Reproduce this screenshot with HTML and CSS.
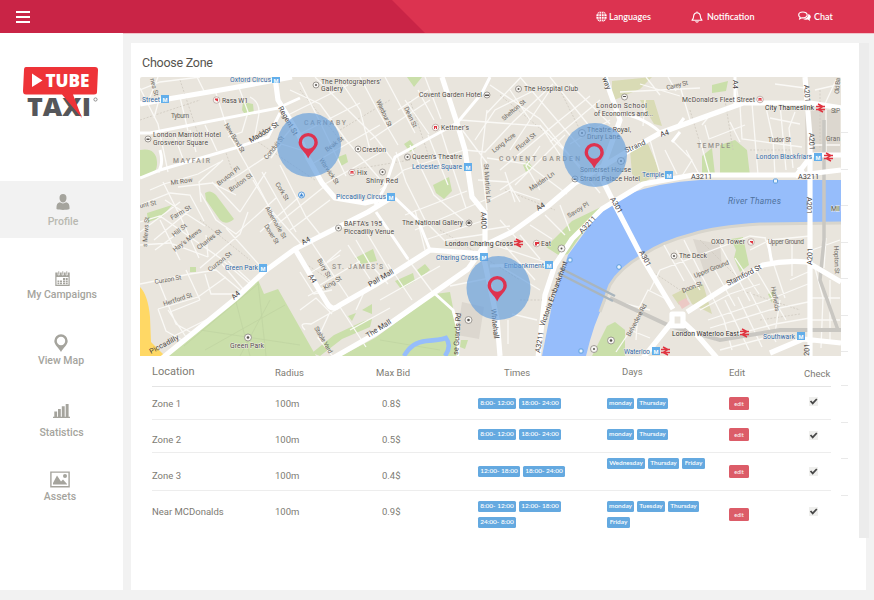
FILE: index.html
```html
<!DOCTYPE html>
<html lang="en">
<head>
<meta charset="utf-8">
<title>Tube Taxi - Choose Zone</title>
<link rel="stylesheet" href="styles.css">
</head>
<body>
<header class="topbar">
  <div class="topbar-brand">
    <div class="burger"><i></i><i></i><i></i></div>
  </div>
  <nav class="topnav">
    <a class="nav-lang"><svg width="11" height="11" viewBox="0 0 11 11"><circle cx="5.5" cy="5.5" r="5.3" fill="#fff"/><path d="M5.5 0v11M0 5.5h11M1 2.8h9M1 8.2h9" stroke="#dc3350" stroke-width=".7" fill="none"/><ellipse cx="5.5" cy="5.5" rx="2.6" ry="5.2" stroke="#dc3350" stroke-width=".7" fill="none"/></svg><span>Languages</span></a>
    <a class="nav-note"><svg width="12" height="12" viewBox="0 0 12 12"><path d="M1 9.2C2.6 8 2.6 6.500 2.700 4.800 2.900 2.800 4.200 1.700 6 1.700s3.100 1.100 3.300 3.100C9.400 6.500 9.400 8 11 9.200zM6 1.700V.4M4.700 10.200c.3 1.400 2.300 1.400 2.600 0" stroke="#fff" stroke-width="1.100" fill="none" stroke-linejoin="round"/></svg><span>Notification</span></a>
    <a class="nav-chat"><svg width="13" height="11" viewBox="0 0 13 11"><path d="M4.800 1C2.400 1 .7 2.200.7 4c0 1 .5 1.700 1.400 2.200L1.700 7.900l2-1.100c3 .3 5.500-.8 5.500-2.900C9.200 2.200 7.200 1 4.800 1z" fill="none" stroke="#fff" stroke-width="1.200"/><path d="M10.200 3c3 .8 3.300 3.600 1.400 4.900l.6 2-2.500-1.300c-1.900.3-3.700-.1-4.700-.9 3.200.1 5.600-1.700 5.200-4.700z" fill="#fff"/></svg><span>Chat</span></a>
  </nav>
</header>
<div class="layout">
  <aside class="sidebar">
    <svg class="logo" width="76" height="53" viewBox="22 66 76 53">
      <text x="27" y="115.500" class="logo-taxi" textLength="64" lengthAdjust="spacingAndGlyphs">TAXI</text>
      <path d="M26 67 H95 Q98 67 98 70 L97 92 Q97 94.500 94 94.500 H73 L82 118 L62 94.500 H26 Q23 94.500 23 91 L24 70 Q24 67 26 67z" fill="#ee3338"/>
      <path d="M32 73.500 L42.500 80.500 L32 87z" fill="#fff"/>
      <text x="45.500" y="87.300" class="logo-tube" textLength="44" lengthAdjust="spacingAndGlyphs">TUBE</text>
      <circle cx="95.500" cy="99.500" r="1.600" fill="none" stroke="#777" stroke-width=".8"/>
    </svg>
    <a class="side profile"><svg width="14" height="16" viewBox="0 0 14 16"><path d="M7 0c2.300 0 3.500 1.600 3.500 4S9 8.600 7 8.600 3.500 6.400 3.500 4 4.700 0 7 0zM3.800 8.300c2 1.500 4.400 1.500 6.400 0C13 9 13.700 11 13.500 15c-3 1.200-10 1.200-13 0C.3 11 1 9 3.800 8.300z"/></svg><span>Profile</span></a>
    <a class="side campaigns"><svg width="15" height="16" viewBox="0 0 15 16"><path fill-rule="evenodd" d="M.3 1.500h14.400v13.500H.3zM1.500 6v7.800h12V6z"/><path d="M3 0h1.500v4H3zM7 0h1.500v4H7zM11 0h1.500v4H11z" stroke="#fff" stroke-width=".6"/><path d="M8 7h2v2H8zM10.700 7h2v2h-2zM2.500 9.500h1.800v1.700H2.500zM5 9.500h2v1.700H5zM8 9.500h2v1.700H8zM10.700 9.500h2v1.700h-2zM2.500 11.800h1.800v1.500H2.500zM5 11.800h2v1.500H5zM8 11.800h2v1.500H8zM10.700 11.800h2v1.500h-2z"/></svg><span>My Campaigns</span></a>
    <a class="side viewmap"><svg width="14" height="18" viewBox="0 0 14 18"><path fill-rule="evenodd" d="M7 .3a6.700 6.700 0 0 1 6.700 6.700C13.700 11 9 14 7 18 5 14 .3 11 .3 7A6.700 6.700 0 0 1 7 .3zM7 2.800a4.200 4.200 0 1 0 0 8.400 4.200 4.200 0 0 0 0-8.400z"/></svg><span>View Map</span></a>
    <a class="side stats"><svg width="17" height="14" viewBox="0 0 17 14"><path d="M0 12.700h17V14H0zM1.300 7.500h2.800V13H1.300zM5 5h2.800v8H5zM8.800 2.300h2.900V13H8.800zM12.700 0h2.900v13h-2.900z"/></svg><span>Statistics</span></a>
    <a class="side assets"><svg width="20" height="17" viewBox="0 0 20 17"><path fill-rule="evenodd" d="M.2.400h19.600v16H.2zM1.600 1.800V15h16.800V1.800z"/><path d="M3 13.500V12l4-7.500 4 6 2-2 4 4.500v.500z"/><circle cx="15" cy="5" r="2"/></svg><span>Assets</span></a>
  </aside>
  <main class="content">
    <div class="panel-row">
      <section class="panel">
        <h1>Choose Zone</h1>
        <div class="map-row">
        <svg class="map" width="701" height="279" viewBox="140 77 701 279">
          <rect x="140" y="77" width="701" height="279" fill="#e9e5dd"/>
          <!-- blocks -->
          <g fill="#dcd7cf"><path d="M462 302l22 5-5 32-22-4zM693 239l27 5 2 24-18 3zM805 110h35v45h-35z"/></g>
          <g fill="#d9dbb5"><path d="M612 81l40-4-12 12-28 12zM630 150l18-6 12 28-18 12-10-10zM640 100l14 0 8 26-8-2zM685 291l18-7 9 30-20-10zM672 295l12-6 3 10-8 6z"/></g>
          <path d="M678 302l8-4 4 6-8 5z" fill="#ecc9c5"/>
          <!-- parks -->
          <g fill="#cadfaa">
            <path d="M168 356L258 280L264 294L278 289L316 356z"/>
            <path d="M341 356L375 338L435 294L450 292L455 318L460 356z"/>
            <path d="M140 150q16-3 17 12t-17 14zM205 193q5-4 11 2l18 24q-8 7-14 1l-14-20zM147 213l25-8-10 12-14 5z"/>
            <path d="M243 102l10 2 1 10-8 2-4-6zM407 77h15l-8 10zM404 144l6-4 6 8-6 4zM433 185l16-8 3 14-8 8-8-6zM523 165l5-4 5 7-7 4zM338 157l8-3 2 8-7 4zM355 258l18-9 4 12-16 3zM395 281l18-8 2 8-14 8zM417 270l8-6 5 6-9 7zM190 267h6v5h-6z"/>
            <path d="M546 247l26-26 29-14-10 14-23 33-8 2zM702 156l10-8 3 27-13 2zM720 145l15-5 12 10 3 26h-30zM712 85l16-4-2 10-14 2zM731 239l12-2 6 28-9 7-6-14 2-8zM768 294l6-3-2 12zM592 356l15-30 8-4 10 8v26zM580 225l18-12-8 12z"/>
            <path d="M312 353l22-18 30-14 8-2-2 8-28 12-22 17zM348 316l8-3-4 8zM362 310l10-6v10zM461 340l7 0-3 9-5-2z"/>
          </g>
          <path d="M184 346L258 284M235 298l15 58M258 282l8 74M205 350l80-45M270 300l-30 56M200 330l100 15M380 340l60 10" stroke="#bfd3a1" stroke-width=".7" fill="none"/>
          <path d="M140 287q8 8 10 30l1 25 14 14h-25z" fill="#ffd865"/>
          <!-- water -->
          <path d="M542 356L552 305L568 255L590 225Q605 206 625 195Q660 182 700 180H841V223L760 224Q715 227 693 234Q662 242 643 255Q620 268 610 285L605 302Q594 322 586 356z" fill="#96bdfb"/>
          <path d="M841 223L760 224Q715 227 693 234Q662 242 643 255Q620 268 610 285L600 312" fill="none" stroke="#d8d5cc" stroke-width="3"/>
          <path d="M404 356q8-14 22-15t20-3q6 8-1 18" fill="none" stroke="#96bdfb" stroke-width="4.500"/>
          <!-- dashed paths -->
          <g stroke="#cbc5bb" stroke-width=".7" stroke-dasharray="2 1.500" fill="none"><path d="M140 120l60-20M180 80l20 60M225 150l12 34M255 140l60 40M300 90l40 50M340 130l50-30M350 170l60-10M410 100l20 60M500 95l60 50M505 190l50 20M560 90l20 40M690 110l12 40M725 100l8 50M750 150h40M820 90v60M300 260l30 20M200 220l50 40M440 230l80 50M520 300h26M650 270l30 20M700 240l40 40M740 290l60 20M760 320l40-6"/></g>
          <!-- side streets -->
          <g class="minor">
            <path d="M140 88l18 36 10 48M158 77l-8 20M160 96l-6 22M180 97l8 34M197 77l8 16M215 90l14 44 26 46 24 46M238 85l10 27-6 20-14 5M205 125l12 26M175 137l8 22M190 130l6 22M250 97q12 6 8 22l-3 16M140 90l20-8 40-5"/>
            <path d="M150 190l14-6 34-10 22-12M163 182l18 36 18 40M140 205l30-12 20 2 14 26M178 187l34-4 24 12M200 192l16 28 20 14 40-36M230 180l10-6 30-20 20-24M212 182l28 30M240 212l26-40M223 160l-24 22 2 20M253 180l18 30 30 34M262 172l34 60M280 165l26 52 16 20M300 196l-40 36M325 186l-50 40M330 200l-40 30M271 158l10-14 20 6"/>
            <path d="M140 222l20-6 60 42 30 26M155 250l22-16M180 260l-20-40M200 268l40-34 8-22M165 200l40 26M190 210l-36 30M140 245l30-2 38 14M208 257l-2-22M140 284l50-10 26-4 24 20M158 309l40-12 28-20M168 310l20 30M158 280l18 44 18 10M158 309l8 22 18 10M186 270l14 30M205 274l6 20 30 0M200 300l-30 12M210 318l-40 20M244 290l-22-26M252 283l-24-22M262 268l-36-40M140 232l40-30"/>
            <path d="M290 90l30 14 26 36 40 46M300 82l20 40 26 54M315 77l60 60 20 26M340 80l20 30 10 40M360 77l18 34 20 34M385 77l16 30 14 26M405 100l24 34M418 90l16 30M430 100l-60 40M425 77l16 42M288 115l60-30M298 135l62-32M310 165l70-40M325 184l60-34M396 152l10 30 20 40 20 20M410 145l24 50 30 26M428 135l20 50M440 128l16 50 10 30M380 190l24-20 60-20M405 215l62-24M415 230l70-30M425 240l60-20M398 110l30-20"/>
            <path d="M487 110l-6 50 6 50M460 120l80 6 40 40M465 150l20 2 28-30 40-38M487 113l34-36M490 85l50 34 60 74M520 77l60 70M550 77l48 60M570 84l40 40M500 170l60-50 30-24M510 150l40-60M515 185l50-50M487 158l40 6 40 30M475 140l20-30 40-20M500 190l30-20M478 180l30 2 12 20M490 200l20-10 30 10M505 172l10 30M540 190l-14-24 14-20M600 100l-50 42M610 120l-40 24M457 123l30 40M530 120l-20-30M540 125l20 30"/>
            <path d="M645 100l-2 26M660 95l-14-18M620 92l40-2 40-2M668 77l8 14M680 86l10 34M640 84l40 12M700 140l10 36M705 125l4 14 36-14M710 115l-8 10M672 140l20 20-10 16M665 150l12 24M686 150l14 26M650 140l10 34M740 105l2 34 60 8M752 103l6 72M765 103l8 36 2 36M780 104l6 66M795 112l-6 16 4 40M730 122l10 20M770 118l30 6M775 84l30 4M735 77l4 26M836 80l-12 26M826 110v50M815 90l26-6M812 145h28"/>
            <path d="M310 240l40 60M327 262l14-12M320 285l40-24M348 245l22 34M340 255l-30 18M356 240l14 24 18 20M365 230l24 40M300 272l14 22 18-4M308 296l22-12M300 310l16-12 16 16M305 330q-8-8 6-6l28-16M340 307l26 40M330 312l-12 26 16 20M350 330l40-22M366 288l-10 22M388 264l24 36M404 254l30 40M380 300l60-34M395 320l50-36M445 252l30 10M425 250l-10-40M446 240l40-6M450 286l40-8M512 314l25 6M508 320v24M540 290l-40-24M520 235l20 24M505 246l30 34M530 225l22 14M545 215l20 20M560 205l10 26M545 262l-60-20M500 220l18 20M485 230l25-4"/>
            <path d="M668 300l-20-10-10 20-2 30M650 290l10-20 90-34 16 2M664 245l20 36M684 240l20 40 20 40 8 30M700 290l-24-40M720 245l30 56M715 270l20 36M735 258l24 36M750 250l20-10 40-4M765 238l20 60M792 240v36M756 270l30 50M708 320l60-20 40-16M710 328l60-18 38-8M715 340l60-16 35-6M720 350l60-16M725 300l24 50M738 297l24 50M750 292l26 50M700 310l30-16 30-10M780 300l-6 40M815 268l8 30-2 50M812 298h28M812 320h28M830 280v60M826 238l-2 30M812 250l28-10M790 280l18-8M610 300l40 10M640 316l-24 36M630 330l20 8"/>
          </g>
          <g stroke="#c9c7c2" fill="none"><path d="M610 298l60 28 50 14 60-10 61 0" stroke-width="4"/><path d="M560 268l55 28M558 273l55 28" stroke-width="2.500" stroke="#a9b5bd"/><path d="M824 120v120l-4 40 18 50" stroke-width="3.500"/></g>
          <!-- primary roads -->
          <g class="medium">
            <path d="M140 133l10 0L278 108L300 98M140 178L160 170L235 148L268 137L280 113M160 150q4 14-2 22M375 205L385 187L395 157L457 123L482 93L490 77M376 212L408 259M395 198L418 220L430 250M433 292L453 310L458 330V356M610 112Q640 114 660 132M735 77V104M772 265l-4-25M660 136L678 126L684 118M553 264L490 266M680 132L672 142"/>
          </g>
          <g class="major">
            <path d="M140 104L168 99L232 88L292 77M275 77L278 100L298 133L308 158L322 183L335 198L365 203L394 196"/>
            <path d="M160 360L235 299L265 271L295 249L368 212L394 196M295 249L327 303Q332 312 340 305L375 285L430 250L485 254"/>
            <path d="M333 358L375 334L435 292L468 269L485 245L512 232L548 206L575 183L630 150L660 133L743 103L810 103L841 108"/>
            <path d="M442 77L457 123L465 150L472 197L485 213V254M482 250L497 319L500 356"/>
            <path d="M538 358L545 295L555 265L572 239L602 209L643 184L693 175H800L841 170M795 177L812 155L841 155M805 177l-6-10"/>
            <path d="M605 77L610 92L620 120L600 175L615 205L643 259L673 309M805 77L810 137V356M672 314H683V326H672zM687 312L723 289L763 265Q785 260 807 262L841 282M672 322L643 358M683 322L697 335L717 358M770 353L803 339L841 343"/>
          </g>
          <!-- station badges -->
          <g class="metro"><rect x="272" y="77" width="8" height="6"/><rect x="161" y="95" width="8" height="8"/><rect x="387" y="193" width="8" height="8"/><rect x="464" y="163" width="8" height="8"/><rect x="259" y="264" width="8" height="8"/><rect x="480" y="253" width="8" height="8"/><rect x="545" y="261" width="8" height="8"/><rect x="665" y="171" width="8" height="8"/><rect x="814" y="153" width="8" height="8"/><rect x="652" y="347" width="8" height="8"/><rect x="797" y="332" width="8" height="8"/></g>
          <g class="badge-m"><text x="273.500" y="82.500">M</text><text x="162.500" y="101.500">M</text><text x="388.500" y="199.500">M</text><text x="465.500" y="169.500">M</text><text x="260.500" y="270.500">M</text><text x="481.500" y="259.500">M</text><text x="546.500" y="267.500">M</text><text x="666.500" y="177.500">M</text><text x="815.500" y="159.500">M</text><text x="653.500" y="353.500">M</text><text x="798.500" y="338.500">M</text></g>
          <g stroke="#e03440" stroke-width="1.400" fill="none"><path id="rail" d="M816 106.500h9M816 109.500h9M818 104l5 2.500-5 3 5 2.500"/><use href="#rail" x="8" y="49"/><use href="#rail" x="-302" y="135"/><use href="#rail" x="-155" y="243"/><use href="#rail" x="-76" y="225"/></g>
          <g fill="#f7f5f2" stroke="#8b8781" stroke-width=".8"><circle cx="316" cy="85" r="3"/><circle cx="148" cy="139" r="3"/><circle cx="358" cy="149" r="3"/><circle cx="382.500" cy="172" r="3"/><circle cx="487" cy="95" r="3"/><circle cx="518.500" cy="89" r="3"/><circle cx="407.500" cy="157" r="3"/><circle cx="338.500" cy="228" r="3"/><circle cx="469" cy="223" r="3"/><circle cx="624.500" cy="97" r="3"/><circle cx="674" cy="256" r="3"/><circle cx="248" cy="337.500" r="3.500"/><circle cx="468.500" cy="320" r="3.500"/><circle cx="561.500" cy="248.500" r="3.500"/><circle cx="611" cy="340.500" r="3.500"/><circle cx="594" cy="349" r="3.500"/><circle cx="582" cy="133" r="3.500"/><circle cx="621" cy="161" r="3.500"/><circle cx="575" cy="179" r="3"/></g>
          <g fill="#56524e"><circle cx="316" cy="85" r="1"/><circle cx="358" cy="149" r="1"/><circle cx="382.500" cy="172" r="1"/><circle cx="518.500" cy="89" r="1"/><circle cx="407.500" cy="157" r="1"/><circle cx="338.500" cy="228" r="1"/><circle cx="674" cy="256" r="1"/><circle cx="561.500" cy="248.500" r="1"/><circle cx="248" cy="337.500" r="1.300"/><circle cx="468.500" cy="320" r="1.300"/><circle cx="611" cy="340.500" r="1.300"/><circle cx="594" cy="349" r="1"/><circle cx="582" cy="133" r="1"/><circle cx="621" cy="161" r="1"/><path d="M485 94.500h4v1.500h-4zM146.500 138.500h3v1.500h-3zM467.500 221.500h3v2.500h-3zM623 96h3v1h-3zM573.500 178.500h3v1.500h-3z"/></g>
          <g fill="#f7f5f2" stroke="#b9a5a0" stroke-width=".8"><circle cx="216.500" cy="100" r="3.300"/><circle cx="352" cy="172.500" r="3.300"/><circle cx="435.500" cy="127.500" r="3.300"/><circle cx="760" cy="99.500" r="3.300"/><circle cx="751" cy="242" r="3.300"/><circle cx="536.500" cy="243.500" r="3.300"/></g>
          <g fill="#e03440"><path d="M215 98.500h3v3l-3-1.500zM350.500 171h3v3h-1v-1.500h-1v1.500h-1zM434 126h3v3h-1v-1.500h-1v1.500h-1zM758.500 98h3v3h-1v-1.500h-1v1.500h-1zM750 241h3v3l-3-2zM535 242h4v2h-2v1.500h-2z"/></g>
          <g fill="#e9f3fd" stroke="#5d9fdd" stroke-width="1"><circle cx="301.500" cy="195" r="3"/><rect x="773.500" y="179" width="4" height="4" rx="1"/><rect x="568" y="258" width="4" height="4" rx="1"/><circle cx="619" cy="267" r="2.300"/><rect x="579" y="349" width="4" height="4" rx="1"/></g>
          <path d="M299.500 196.500l2-3.500 2 3.500z" fill="#3f87d2"/>
          <!-- place labels -->
          <g class="poi">
            <text x="321" y="84" textLength="60">The Photographers'</text><text x="321" y="91" textLength="22">Gallery</text>
            <text x="222" y="103" textLength="26">Rasa W1</text><text x="153" y="137" textLength="68">London Marriott Hotel</text><text x="153" y="145" textLength="55">Grosvenor Square</text>
            <text x="362" y="152" textLength="24">Creston</text><text x="357" y="175" textLength="10">Hix</text><text x="366" y="183" textLength="32">Shiny Red</text>
            <text x="419" y="97" textLength="63">Covent Garden Hotel</text><text x="524" y="91" textLength="54">The Hospital Club</text><text x="441" y="130" textLength="28">Kettner's</text><text x="412" y="159" textLength="50">Queen's Theatre</text>
            <text x="596" y="108" textLength="51">London School</text><text x="594" y="116" textLength="59">of Economics and...</text><text x="587" y="132" textLength="44">Theatre Royal,</text><text x="587" y="139" textLength="33">Drury Lane</text><text x="580" y="172" textLength="51">Somerset House</text><text x="580" y="181" textLength="60">Strand Palace Hotel</text>
            <text x="682" y="102" textLength="73">McDonald's Fleet Street</text><text x="344" y="226" textLength="38">BAFTA's 195</text><text x="344" y="234" textLength="50">Piccadilly Venue</text><text x="402" y="225" textLength="61">The National Gallery</text>
            <text x="541" y="246" textLength="10">Eat</text><text x="711" y="244" textLength="34">OXO Tower</text><text x="679" y="258" textLength="28">The Deck</text><text x="230" y="348" textLength="34">Green Park</text><text x="831" y="211" textLength="9">Mill</text>
          </g>
          <g class="poi dark"><text x="765" y="110" textLength="49">City Thameslink</text><text x="445" y="246" textLength="68">London Charing Cross</text><text x="672" y="336" textLength="67">London Waterloo East</text></g>
          <g class="tube"><text x="230" y="82" textLength="41">Oxford Circus</text><text x="142" y="102" textLength="18">Street</text><text x="336" y="199" textLength="50">Piccadilly Circus</text><text x="412" y="169" textLength="50">Leicester Square</text><text x="225" y="270" textLength="33">Green Park</text><text x="436" y="260" textLength="42">Charing Cross</text><text x="504" y="268" textLength="40">Embankment</text><text x="642" y="177" textLength="22">Temple</text><text x="756" y="159" textLength="56">London Blackfriars</text><text x="624" y="354" textLength="26">Waterloo</text><text x="763" y="339" textLength="32">Southwark</text></g>
          <g class="area"><text x="173" y="163" textLength="37">MAYFAIR</text><text x="304" y="125" textLength="42">CARNABY</text><text x="499" y="161" textLength="81">COVENT GARDEN</text><text x="697" y="148" textLength="33">TEMPLE</text><text x="332" y="269" textLength="51">ST. JAMES'S</text></g>
          <text class="river" x="728" y="204" textLength="53">River Thames</text>
          <g class="street">
            <text x="171" y="118" textLength="18">Tyburn</text><text transform="translate(150 79) rotate(75)">nes St</text><text transform="translate(171 185) rotate(-8)">Mt Row</text>
            <text transform="translate(224 125) rotate(58)" textLength="33">New Bond St</text><text transform="translate(251 143) rotate(-32)" textLength="33" class="bold">Maddox St</text><text transform="translate(278 108) rotate(60)" textLength="32" class="bold">Regent St</text><text transform="translate(267 160) rotate(-52)" textLength="28">Conduit St</text><text transform="translate(327 152) rotate(-36)" textLength="21">Beak St</text><text transform="translate(319 160) rotate(56)" textLength="30">Warwick St</text>
            <text transform="translate(219 186) rotate(-38)" textLength="27">Bruton Pl</text><text transform="translate(231 192) rotate(-36)" textLength="27">Bruton St</text><text transform="translate(275 184) rotate(58)" textLength="20">Cork St</text><text transform="translate(265 208) rotate(60)" textLength="36">Albemarle St</text><text transform="translate(264 226) rotate(58)" textLength="22">Dover St</text>
            <text transform="translate(140 208) rotate(-12)">unt St</text><text transform="translate(172 220) rotate(-30)">Farm St</text><text transform="translate(174 237) rotate(-38)" textLength="17">Hill St</text><text transform="translate(175 252) rotate(-38)" textLength="34">Hay's Mews</text><text transform="translate(199 250) rotate(-38)" textLength="29">Charles St</text><text transform="translate(210 272) rotate(-38)" textLength="28">Curzon St</text><text transform="translate(155 284) rotate(-10)" textLength="27">Curzon St</text><text transform="translate(164 306) rotate(-18)" textLength="30">Hertford St</text><text transform="translate(147 247) rotate(-86)">s Mews St</text>
            <text transform="translate(376 101) rotate(65)" textLength="29">Wardour St</text><text transform="translate(404 108) rotate(65)" textLength="22">Dean St</text><text transform="translate(504 121) rotate(-40)" textLength="29">Shelton St</text><text transform="translate(494 153) rotate(-38)" textLength="28">Long Acre</text><text transform="translate(518 151) rotate(-40)" textLength="24">Floral St</text><text transform="translate(484 164) rotate(86)" textLength="39">St Martin's Ln</text><text transform="translate(531 191) rotate(-34)" textLength="29">Maiden Ln</text><text transform="translate(569 218) rotate(-32)" textLength="24">Savoy Pl</text>
            <text transform="translate(667 90) rotate(-14)" textLength="22">Carey St</text><text x="768" y="142" textLength="23">Tudor St</text><text transform="translate(839 94) rotate(-86)" textLength="16">Old Ba</text><text x="831" y="113" textLength="9">St P</text><text x="826" y="141" textLength="14">Gran</text>
            <text transform="translate(317 260) rotate(60)" textLength="21">Bury St</text><text transform="translate(325 290) rotate(-32)" textLength="20">King St</text><text transform="translate(314 328) rotate(60)" textLength="30">Stable Yard</text>
            <text transform="translate(695 278) rotate(-22)" textLength="37">Upper Ground</text><text x="768" y="244" textLength="36">Upper Ground</text><text transform="translate(683 293) rotate(-22)" textLength="21">Doon St</text><text transform="translate(630 337) rotate(-62)" textLength="36">Belvedere Rd</text><text transform="translate(771 287) rotate(80)" textLength="25">Hatfields</text><text transform="translate(834 246) rotate(88)" textLength="28">Hopton St</text>
            <g class="bold"><text transform="translate(370 287) rotate(-30)" textLength="28">Pall Mall</text><text transform="translate(368 338) rotate(-32)" textLength="28">The Mall</text><text transform="translate(626 153) rotate(-24)" textLength="22">Strand</text><text transform="translate(728 286) rotate(-27)" textLength="38">Stamford St</text><text transform="translate(151 354) rotate(-28)" textLength="32">Piccadilly</text><text transform="translate(491 309) rotate(84)" textLength="30">Whitehall</text><text transform="translate(458 355) rotate(-86)" textLength="42">se Guards Rd</text><text transform="translate(544 327) rotate(-70)" textLength="69">Victoria Embankment</text>
            <text transform="translate(540 353) rotate(-80)">A3211</text><text transform="translate(582 234) rotate(-46)">A3211</text><text x="691" y="179">A3211</text><text x="798" y="179">A3211</text><text transform="translate(804 85) rotate(86)">A201</text><text transform="translate(809 133) rotate(88)">A201</text><text transform="translate(807 197) rotate(90)">A201</text><text transform="translate(812 265) rotate(-88)">A201</text><text transform="translate(809 356) rotate(-88)">201</text><text transform="translate(610 199) rotate(60)">A301</text><text transform="translate(639 252) rotate(62)">A301</text><text transform="translate(481 212) rotate(88)">A400</text><text transform="translate(538 211) rotate(-32)">A4</text><text transform="translate(661 137) rotate(-18)">A4</text><text transform="translate(303 245) rotate(-28)">A4</text><text transform="translate(308 276) rotate(60)">A4</text><text transform="translate(234 300) rotate(-42)">A4</text><text transform="translate(733 80) rotate(90)">A4</text><text transform="translate(602 78) rotate(68)">way</text></g>
          </g>
          <!-- zones -->
          <g class="zone"><circle cx="309" cy="145" r="32"/><circle cx="595" cy="155" r="32"/><circle cx="498.500" cy="288" r="32"/></g>
          <g fill="#de3350"><path id="pin" fill-rule="evenodd" d="M308.200 133a9.600 9.600 0 0 1 9.600 9.600c0 6-7 9.500-9.600 15.900-2.600-6.400-9.600-9.900-9.600-15.900a9.600 9.600 0 0 1 9.600-9.600zm0 3.300a6.200 6.200 0 1 0 0 12.400 6.200 6.200 0 0 0 0-12.400z"/><use href="#pin" x="286" y="10"/><use href="#pin" x="189" y="143"/></g>
        </svg>
        <div class="ticks"><i></i><i></i><i></i><i></i><i></i><i></i><i></i></div>
        </div>
        <div class="table-row">
        <div class="table">
          <div class="row head"><span class="big">Location</span><span>Radius</span><span>Max Bid</span><span class="h-times">Times</span><span class="h-days">Days</span><span class="h-edit">Edit</span><span class="h-check">Check</span></div>
          <div class="row r1"><span class="txt">Zone 1</span><span class="txt">100m</span><span class="txt bid">0.8$</span><div class="tags times"><b class="t1">8:00- 12:00</b><b class="t2">18:00- 24:00</b></div><div class="tags days"><b class="d-mon">monday</b><b class="d-thu">Thursday</b></div><button>edit</button><em><svg width="9" height="9" viewBox="0 0 9 9"><path d="M1.500 4l2.200 2.400L7.800 2"/></svg></em></div>
          <div class="row r2"><span class="txt">Zone 2</span><span class="txt">100m</span><span class="txt bid">0.5$</span><div class="tags times"><b class="t1">8:00- 12:00</b><b class="t2">18:00- 24:00</b></div><div class="tags days"><b class="d-mon">monday</b><b class="d-thu">Thursday</b></div><button>edit</button><em><svg width="9" height="9" viewBox="0 0 9 9"><path d="M1.500 4l2.200 2.400L7.800 2"/></svg></em></div>
          <div class="row r3"><span class="txt">Zone 3</span><span class="txt">100m</span><span class="txt bid">0.4$</span><div class="tags times"><b class="t2">12:00- 18:00</b><b class="t2">18:00- 24:00</b></div><div class="tags days"><b class="d-wed">Wednesday</b><b class="d-thu">Thursday</b><b class="d-fri">Friday</b></div><button>edit</button><em><svg width="9" height="9" viewBox="0 0 9 9"><path d="M1.500 4l2.200 2.400L7.800 2"/></svg></em></div>
          <div class="row r4"><span class="txt">Near MCDonalds</span><span class="txt">100m</span><span class="txt bid">0.9$</span><div class="tags times"><b class="t1">8:00- 12:00</b><b class="t2">12:00- 18:00</b><b class="t1">24:00- 8:00</b></div><div class="tags days"><b class="d-mon">monday</b><b class="d-tue">Tuesday</b><b class="d-thu">Thursday</b><b class="d-fri">Friday</b></div><button>edit</button><em><svg width="9" height="9" viewBox="0 0 9 9"><path d="M1.500 4l2.200 2.400L7.800 2"/></svg></em></div>
        </div>
        <div class="ticks low"><i></i><i></i><i></i><i></i></div>
        </div>
      </section>
      <div class="scrollbar"></div>
    </div>
    <div class="panel-foot"></div>
  </main>
</div>
</body>
</html>
```
FILE: styles.css
```css
* { box-sizing: border-box; }
body { margin: 0; width: 874px; height: 600px; overflow: hidden; background: #f2f2f2; font-family: Roboto, "Open Sans", sans-serif; color: #7d7b73; }
.topbar { display: flex; height: 33px; background: #dc3350; box-shadow: 0 1px 0 #f0c4ca; }
.topbar-brand { width: 425px; height: 33px; padding: 11px 16px; background: #c92446; clip-path: polygon(0 0, 392px 0, 425px 33px, 0 33px); }
.burger { display: grid; gap: 3px; width: 14px; }
.burger i { height: 2px; background: #fff; }
.topnav { display: flex; padding-left: 171px; color: #fff; font: 600 9px/33px Lato, sans-serif; }
.topnav a { display: flex; align-items: center; }
.nav-lang { width: 95px; gap: 2px; }
.nav-note { width: 107px; gap: 4px; }
.nav-chat { gap: 3px; }

.layout { display: flex; height: 557px; }
.sidebar { width: 123px; flex: none; background: #fff; display: flex; flex-direction: column; }
.logo { margin: 33px 0 62px 22px; flex: none; }
.logo-tube { font: 800 18px "Open Sans", sans-serif; fill: #fff; }
.logo-taxi { font: 800 25px "Open Sans", sans-serif; fill: #55565a; }
.side { display: flex; flex-direction: column; align-items: center; fill: #a5a49d; color: #a5a49d; font-size: 10.500px; line-height: 16px; font-weight: 500; flex: none; }
.profile { height: 57px; padding: 13px 0 0 3px; background: #f2f2f2; color: #b9b9b1; }
.profile span { margin-top: 4px; }
.campaigns { padding-top: 33px; padding-left: 1px; }
.viewmap { padding-top: 31px; padding-right: 1px; }
.viewmap span { margin-top: 1px; }
.stats { padding-top: 35px; }
.stats span { margin-top: 7px; }
.assets { padding: 30px 3px 0 0; }
.assets span { margin-top: 1px; }

.content { flex: none; width: 751px; padding: 10px 5px 0 8px; }
.panel-row { display: flex; height: 495px; }
.panel { width: 728px; flex: none; padding-left: 9px; background: #fff; }
.panel h1 { margin: 0; padding: 11px 0 0 2px; height: 34px; font-size: 12.500px; line-height: 18px; letter-spacing: -.25px; font-weight: 400; color: #55534e; }
.scrollbar { width: 10px; background: #ececec; }
.panel-foot { height: 52px; width: 735px; background: #fff; }
.map-row { display: flex; height: 279px; }
.map { display: block; flex: none; border-radius: 2px 2px 0 0; }
.ticks { display: grid; grid-auto-rows: 36.500px; padding-top: 55px; width: 7px; }
.ticks i { width: 7px; height: 1px; background: #e9e9e9; }
.minor path { fill: none; stroke: #faf9f6; stroke-width: 1.300; }
.medium path { fill: none; stroke: #fff; stroke-width: 3; stroke-linejoin: round; }
.major path { fill: none; stroke: #fff; stroke-width: 5.200; stroke-linejoin: round; }
.metro rect { fill: #62aeea; }
.badge-m { font: 700 6px "Liberation Sans", sans-serif; fill: #fff; }
.map text { white-space: pre; }
.poi { font: 400 6.800px Roboto, sans-serif; fill: #4f4b47; paint-order: stroke; stroke: #f3f0eb; stroke-width: .8; }
.dark { fill: #2f2d2b; }
.tube { font: 400 6.800px Roboto, sans-serif; fill: #2f68a6; paint-order: stroke; stroke: #f3f0eb; stroke-width: .8; }
.area { font: 500 6.800px Roboto, sans-serif; fill: #96928c; }
.river { font: italic 400 8.500px Roboto, sans-serif; fill: #4f719b; }
.street { font: 6.500px Roboto, sans-serif; fill: #6d6963; }
.bold { font-weight: 400; font-size: 7.300px; fill: #45423f; }
.zone circle { fill: #649edb; fill-opacity: .68; }

.table-row { display: flex; }
.table { width: 679px; margin-left: 12px; }
.row { display: grid; grid-template-columns: 123px 107px 96px 129px 122px 80px 22px; align-items: start; border-bottom: 1px solid #ededed; }
.head { height: 31px; font-size: 9.500px; line-height: 16px; padding-top: 9px; grid-template-columns: 123px 101px 128px 118px 107px 75px 27px; border-color: #e4e4e4; }
.head .big { font-size: 11px; margin-top: -1px; }
.h-days { margin-top: -1px; }
.h-check { margin-top: 1px; }
.txt { font-size: 9.500px; line-height: 14px; white-space: nowrap; }
.r1 { height: 33px; }
.r1 .txt { margin-top: 10px; }
.r1 .tags { margin-top: 11px; }
.r1 button { margin-top: 10px; }
.r1 em { margin-top: 10px; }
.r2 { height: 33px; }
.r2 .txt { margin-top: 13px; }
.r2 .tags { margin-top: 9px; }
.r2 button { margin-top: 8px; }
.r2 em { margin-top: 11px; }
.r3 { height: 38px; }
.r3 .txt { margin-top: 16px; }
.r3 .times { margin-top: 13px; }
.r3 .days { margin-top: 5px; }
.r3 button { margin-top: 12px; }
.r3 em { margin-top: 14px; }
.r4 { height: 46px; border: 0; }
.r4 .txt { margin-top: 14px; }
.r4 .tags { margin-top: 10px; }
.r4 button { margin-top: 17px; }
.r4 em { margin-top: 16px; }
.tags { display: flex; flex-wrap: wrap; gap: 5px 3px; }
.times { width: 92px; }
.days { width: 104px; }
.tags b { height: 11px; border-radius: 1.500px; background: #64a9e0; color: #fff; font: 600 6.500px/10.500px Lato, sans-serif; text-align: center; white-space: nowrap; }
.t1 { width: 38px; }
.t2 { width: 42px; }
.d-mon { width: 27px; }
.d-tue { width: 28px; }
.d-wed { width: 38px; }
.d-thu { width: 31px; }
.d-fri { width: 23px; }
.row button { width: 20px; height: 13px; padding: 0; border: 0; border-radius: 1.500px; background: #dc5c68; color: #fff; font: 5.500px/12px Lato, sans-serif; }
.row em { width: 9px; height: 9px; background: #efefed; }
.row em svg { display: block; fill: none; stroke: #484848; stroke-width: 1.800; }
.low { margin-left: 10px; padding-top: 29px; }
```
